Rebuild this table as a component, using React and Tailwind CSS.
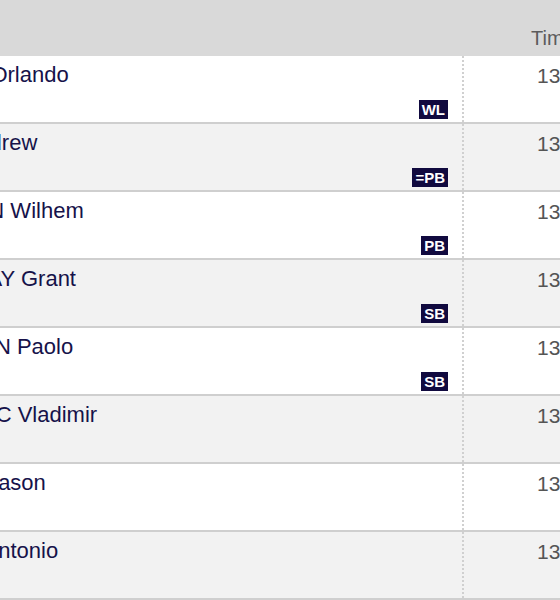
import React from 'react';

const results = [
  { name: 'ORTEGA Orlando', time: '13.08', badge: 'WL' },
  { name: 'POZZI Andrew', time: '13.19', badge: '=PB' },
  { name: 'BELOCIAN Wilhem', time: '13.28', badge: 'PB' },
  { name: 'HOLLOWAY Grant', time: '13.30', badge: 'SB' },
  { name: 'DAL MOLIN Paolo', time: '13.32', badge: 'SB' },
  { name: 'VUKICEVIC Vladimir', time: '13.33' },
  { name: 'JOSEPH Jason', time: '13.34' },
  { name: 'ALKANA Antonio', time: '13.36' },
];

function ResultRow({ row, odd }) {
  return (
    <div
      className={`grid h-[68px] grid-cols-[569px_1fr] border-b-2 border-[#cfcfcf] ${
        odd ? 'bg-[#f2f2f2]' : 'bg-white'
      }`}
    >
      {/* Athlete */}
      <div className="flex flex-col justify-between pb-[3px] pr-[14px] pt-[7px]">
        <div className="text-[22px] leading-[24px] whitespace-nowrap text-[#16124a]">{row.name}</div>
        {row.badge && (
          <div className="self-end bg-[#110a3f] px-[3px] text-[15px] font-bold leading-[19px] text-white">
            {row.badge}
          </div>
        )}
      </div>

      {/* Time */}
      <div className="border-l-2 border-dotted border-[#d0d0d0] pl-[73px] pt-[8px] text-[21px] leading-[24px] text-[#555]">
        {row.time}
      </div>
    </div>
  );
}

export default function App() {
  return (
    <div className="h-[600px] w-[560px] overflow-hidden bg-white font-['Liberation_Sans',Arial,sans-serif]">
      <div className="ml-[-107px] w-[720px]">
        <div className="grid h-[56px] grid-cols-[569px_1fr] bg-[#d9d9d9]">
          <div />
          <div className="flex items-end pb-[7px] pl-[69px] text-[20px] leading-[22px] text-[#5c5c5c]">Time</div>
        </div>
        {results.map((row, i) => (
          <ResultRow key={row.name} row={row} odd={i % 2 === 1} />
        ))}
      </div>
    </div>
  );
}
